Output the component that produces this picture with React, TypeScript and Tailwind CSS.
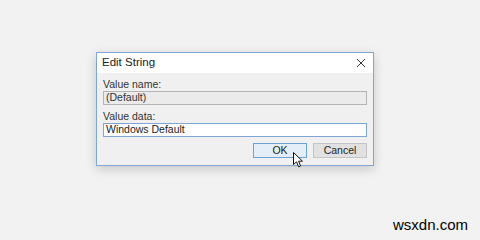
import React from "react";

const Cursor = () => (
  <svg width="11" height="16" viewBox="0 0 11 16" className="absolute left-[293px] top-[152px]">
    <path d="M0.5 0.5 L0.5 12.5 L3.5 9.8 L5.6 14.8 L7.6 14 L5.6 9.2 L9.5 9.2 Z" fill="#fff" stroke="#111" strokeWidth="1" strokeLinejoin="round" />
  </svg>
);

const App = () => {
  return (
    <div
      className="relative w-[480px] h-[240px] bg-[#f2f2f2] pt-[52px] pl-[96px]"
      style={{ fontFamily: '"Liberation Sans", Arial, sans-serif' }}
    >
      {/* Dialog */}
      <div className="w-[278px] h-[114px] border border-[#7ea6d3] bg-[#f0f0f0] shadow-[0_3px_10px_rgba(0,0,0,0.18)] flex flex-col">
        {/* Title bar */}
        <div className="h-[20px] bg-white flex items-center justify-between pl-[5px] pr-[7px]">
          <span className="text-[11.5px] text-[#222]">Edit String</span>
          <svg width="10" height="10" viewBox="0 0 10 10">
            <path d="M1 1 L9 9 M9 1 L1 9" stroke="#333" strokeWidth="1" />
          </svg>
        </div>

        {/* Body */}
        <div className="flex flex-col px-[6px] pt-[5px]">
          <label className="text-[10.5px] leading-[13px] text-[#333]">Value name:</label>
          <div className="h-[14px] border border-[#b4b4b4] bg-[#ebebeb] flex items-center pl-[2px] text-[10.5px] text-[#333]">
            (Default)
          </div>

          <label className="mt-[5px] text-[10.5px] leading-[13px] text-[#333]">Value data:</label>
          <div className="h-[14px] border border-[#7fa6d0] bg-white flex items-center pl-[2px] text-[10.5px] text-[#222]">
            Windows Default
          </div>

          <div className="mt-[6px] flex justify-end gap-[6px]">
            <button className="w-[54px] h-[15px] border border-[#6aa1d6] bg-[#e3eef9] text-[10.5px] leading-none text-[#222]">
              OK
            </button>
            <button className="w-[54px] h-[15px] border border-[#c4c4c4] bg-[#e1e1e1] text-[10.5px] leading-none text-[#222]">
              Cancel
            </button>
          </div>
        </div>
      </div>

      <Cursor />

      <span className="absolute right-[12px] bottom-[4px] text-[15px] text-black">wsxdn.com</span>
    </div>
  );
};

export default App;
